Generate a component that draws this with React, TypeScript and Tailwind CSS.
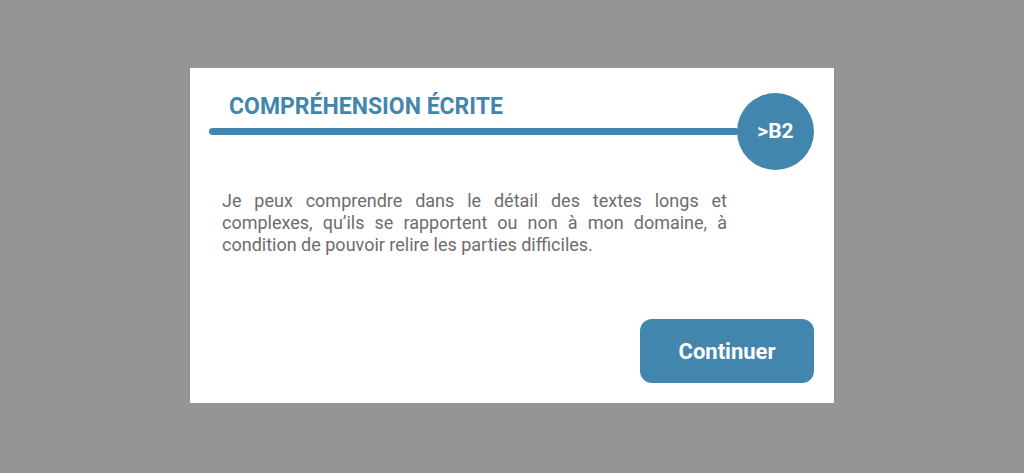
import React from 'react'

const blue = 'bg-[#4386ad]'

const SkillCard = () => {
  return (
    <div className="mb-[2px] flex h-[335px] w-[644px] flex-col bg-white pb-[20px] pl-[19px] pr-[20px] pt-[25px]">
      {/* header: title over a bar that runs into the level badge */}
      <div className="flex items-start">
        <div className="flex flex-1 flex-col pt-[1px]">
          <h1 className="pl-[20px] text-[23px] font-bold leading-[26px] text-[#4386ad]">
            COMPRÉHENSION ÉCRITE
          </h1>
          <div className={`mt-[8px] h-[7px] rounded-full ${blue}`} />
        </div>
        <div className={`-ml-[2px] flex h-[77px] w-[77px] items-center justify-center rounded-full ${blue}`}>
          <span className="text-[21px] font-bold text-white">&gt;B2</span>
        </div>
      </div>

      <p className="ml-[13px] mt-[20px] w-[505px] text-justify text-[18px] leading-[22px] text-[#6d6d6d]">
        Je peux comprendre dans le détail des textes longs et complexes, qu’ils se rapportent ou non à mon
        domaine, à condition de pouvoir relire les parties difficiles.
      </p>

      <div className="mt-auto flex justify-end">
        <button className={`h-[64px] w-[174px] rounded-[12px] text-[22px] font-bold text-white ${blue}`}>
          Continuer
        </button>
      </div>
    </div>
  )
}

export default function App() {
  return (
    <div
      className="flex h-[473px] w-full items-center justify-center bg-[#959595]"
      style={{ fontFamily: 'Roboto, "Liberation Sans", sans-serif' }}
    >
      <SkillCard />
    </div>
  )
}
